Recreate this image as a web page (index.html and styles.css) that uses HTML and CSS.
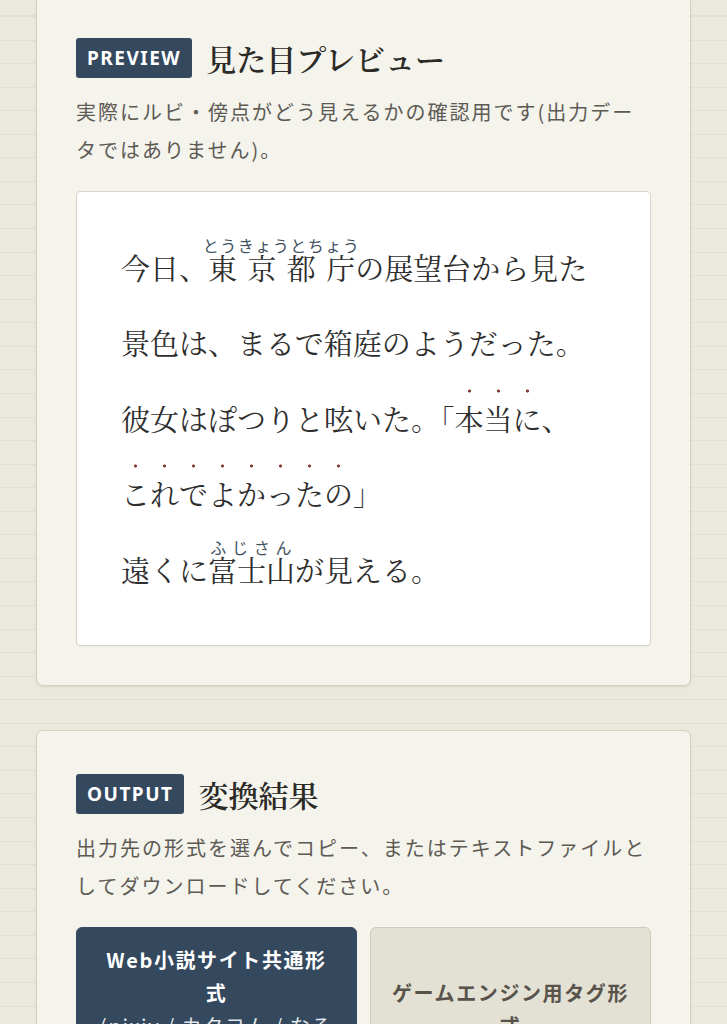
FILE: index.html
```html
<!DOCTYPE html>
<html lang="ja">
<head>
    <meta charset="UTF-8">
    <meta name="viewport" content="width=device-width, initial-scale=1.0">
    <title>ルビ・傍点変換ツール</title>
    <link rel="stylesheet" href="styles.css">
</head>
<body>
    <main class="container">
        <!-- プレビュー -->
        <section class="card">
            <div class="card-head">
                <span class="badge">PREVIEW</span>
                <h2 class="card-title">見た目プレビュー</h2>
            </div>
            <p class="card-desc">実際にルビ・傍点がどう見えるかの確認用です(出力データではありません)。</p>
            <div class="preview">
                <p class="preview-text">今日、<ruby>東京都庁<rt>とうきょうとちょう</rt></ruby>の展望台から見た<br>景色は、まるで箱庭のようだった。<br>彼女はぽつりと呟いた。「<span class="bouten">本当に</span>、<br><span class="bouten">これでよかったの</span>」<br>遠くに<ruby>富士山<rt>ふじさん</rt></ruby>が見える。</p>
            </div>
        </section>

        <!-- 出力 -->
        <section class="card">
            <div class="card-head">
                <span class="badge">OUTPUT</span>
                <h2 class="card-title">変換結果</h2>
            </div>
            <p class="card-desc">出力先の形式を選んでコピー、またはテキストファイルとしてダウンロードしてください。</p>
            <div class="format-list">
                <button class="format-btn active" type="button">
                    <span class="format-name">Web小説サイト共通形式</span>
                    <span class="format-sub">(pixiv / カクヨム / なろう)</span>
                </button>
                <button class="format-btn" type="button">
                    <span class="format-name">ゲームエンジン用タグ形式</span>
                </button>
            </div>
        </section>
    </main>
</body>
</html>
```

FILE: styles.css
```css
body {
    margin: 0;
    background-color: #ebe8dd;
    background-image: repeating-linear-gradient(180deg, rgba(120, 110, 80, 0.07) 0, rgba(120, 110, 80, 0.07) 1px, transparent 1px, transparent 23.56px);
    background-position: 0 16px;
    font-family: "Noto Sans CJK JP", "Noto Sans", sans-serif;
    color: #333;
}

.container {
    display: flex;
    flex-direction: column;
    gap: 44px;
    padding: 0 36px 40px;
    margin-top: -6px;
}

.card {
    background: #f4f3ec;
    border: 1px solid #d5d0c1;
    border-radius: 7px;
    padding: 39px;
    box-shadow: 0 1px 2px rgba(0, 0, 0, 0.08);
}

.card-head {
    display: flex;
    align-items: center;
    gap: 14px;
    height: 48px;
    margin-bottom: 11px;
}

.badge {
    background: #34495e;
    color: #fff;
    font-family: "Noto Sans", sans-serif;
    font-weight: 700;
    font-size: 19px;
    letter-spacing: 1.5px;
    line-height: 40px;
    padding: 0 11px;
    border-radius: 3px;
}

.card-title {
    margin: 0;
    font-family: "Noto Serif CJK JP", "Noto Sans CJK JP", serif;
    font-size: 30px;
    font-weight: 600;
    line-height: 48px;
    color: #2b2a27;
}

.card-desc {
    margin: 0 0 22px;
    font-size: 20px;
    line-height: 38px;
    letter-spacing: 0.1em;
    color: #5d5a54;
}

/* プレビュー */
.preview {
    background: #fff;
    border: 1px solid #d8d3c6;
    border-radius: 4px;
    padding: 38px 44px;
    box-shadow: 0 1px 1px rgba(0, 0, 0, 0.05);
}

.preview-text {
    margin: 0;
    font-family: "Noto Serif CJK JP", "Noto Sans CJK JP", serif;
    font-size: 29px;
    line-height: 75.4px;
    color: #2e2e2e;
}

.preview-text rt {
    font-family: "Noto Sans CJK JP", sans-serif;
    font-size: 16px;
    letter-spacing: 1.5px;
    color: #3e4f60;
}

.bouten {
    padding-top: 10px;
    background-image: radial-gradient(circle at center, #83403c 1.2px, transparent 1.9px);
    background-size: 1em 6px;
    background-repeat: repeat-x;
    background-position: 0 0;
}

/* 出力形式 */
.format-list {
    display: flex;
    gap: 13px;
}

.format-btn {
    flex: 1;
    display: flex;
    flex-direction: column;
    justify-content: center;
    align-items: center;
    padding: 15px 20px 23px;
    border-radius: 6px;
    border: 1px solid #cfcab9;
    background: #e3e0d4;
    color: #58534a;
    font-family: "Noto Sans CJK JP", "Noto Sans", sans-serif;
    font-size: 20px;
    line-height: 33px;
    letter-spacing: 0.08em;
    text-align: center;
    cursor: pointer;
}

.format-btn.active {
    background: #34495e;
    border-color: #34495e;
    color: #fff;
}

.format-name {
    font-weight: 700;
}

.format-sub {
    font-weight: 400;
    color: rgba(255, 255, 255, 0.88);
}
```
